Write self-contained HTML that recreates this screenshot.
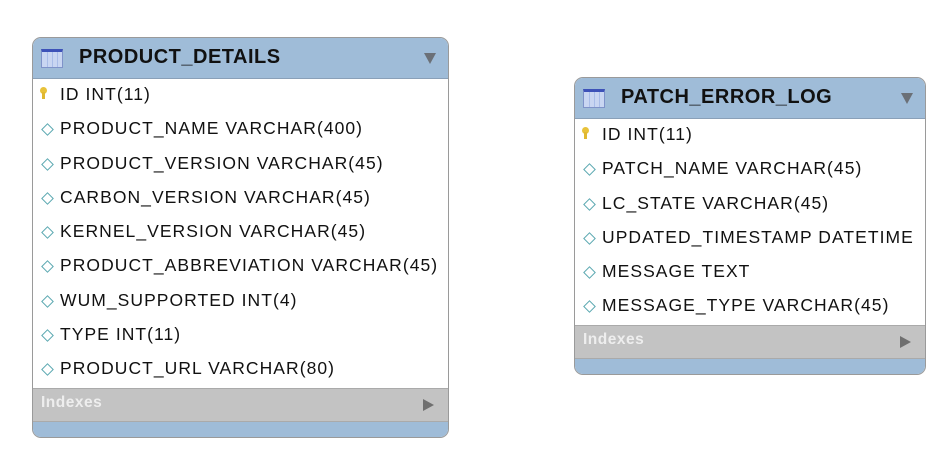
<!DOCTYPE html>
<html><head><style>
body{margin:0;width:950px;height:460px;background:#fff;position:relative;font-family:"Liberation Sans",sans-serif;overflow:hidden}
.t{position:absolute;border:1px solid #9a9a9a;border-radius:9px;overflow:hidden;background:#fff}
.h{height:40px;background:#9fbcd8;border-bottom:1px solid #8aa0b8;position:relative}
.h b{position:absolute;left:46px;top:8px;font-size:20px;letter-spacing:0.5px;color:#111}
.ic{position:absolute;left:8px;top:11px;width:22px;height:19px;background:linear-gradient(90deg,#c9d6f2 0,#c9d6f2 5px,#a9bde8 5px,#a9bde8 6px,#c9d6f2 6px,#c9d6f2 10px,#a9bde8 10px,#a9bde8 11px,#c9d6f2 11px,#c9d6f2 15px,#a9bde8 15px,#a9bde8 16px,#c9d6f2 16px);border:1px solid #7f93c9;border-top:3px solid #3d52b8;box-sizing:border-box}
.ar{position:absolute;right:12px;top:15px;width:0;height:0;border-left:6px solid transparent;border-right:6px solid transparent;border-top:11px solid #6b7077}
.r{height:34.3px;line-height:31px;font-size:17.5px;color:#111;padding-left:27px;position:relative;letter-spacing:1.05px;white-space:nowrap}
.r:before{content:"";position:absolute;left:10px;top:12px;width:7px;height:7px;border:1.2px solid #5aa8b0;transform:rotate(45deg)}
.r.k:before{border:none;width:7px;height:7px;top:8px;left:7px;background:#e8c23a;border-radius:50%;transform:none}
.r.k:after{content:"";position:absolute;left:9px;top:13px;width:3px;height:7px;background:#e0b830}
.ix{height:32px;background:#c3c3c3;border-top:1px solid #aaa;border-bottom:1px solid #aaa;position:relative;color:#eee;font-size:15.5px;font-weight:bold;line-height:28px;padding-left:8px;letter-spacing:0.5px}
.ix:after{content:"";position:absolute;right:14px;top:10px;border-top:6px solid transparent;border-bottom:6px solid transparent;border-left:11px solid #6f6f6f}
.f{height:15px;background:#9fbcd8}
</style></head><body>
<div class="t" style="left:32px;top:37px;width:415px">
<div class="h"><div class="ic"></div><b>PRODUCT_DETAILS</b><div class="ar"></div></div>
<div class="r k">ID INT(11)</div>
<div class="r">PRODUCT_NAME VARCHAR(400)</div>
<div class="r">PRODUCT_VERSION VARCHAR(45)</div>
<div class="r">CARBON_VERSION VARCHAR(45)</div>
<div class="r">KERNEL_VERSION VARCHAR(45)</div>
<div class="r">PRODUCT_ABBREVIATION VARCHAR(45)</div>
<div class="r">WUM_SUPPORTED INT(4)</div>
<div class="r">TYPE INT(11)</div>
<div class="r">PRODUCT_URL VARCHAR(80)</div>
<div class="ix">Indexes</div>
<div class="f"></div>
</div>
<div class="t" style="left:574px;top:77px;width:350px">
<div class="h"><div class="ic"></div><b>PATCH_ERROR_LOG</b><div class="ar"></div></div>
<div class="r k">ID INT(11)</div>
<div class="r">PATCH_NAME VARCHAR(45)</div>
<div class="r">LC_STATE VARCHAR(45)</div>
<div class="r">UPDATED_TIMESTAMP DATETIME</div>
<div class="r">MESSAGE TEXT</div>
<div class="r">MESSAGE_TYPE VARCHAR(45)</div>
<div class="ix">Indexes</div>
<div class="f"></div>
</div>
</body></html>
